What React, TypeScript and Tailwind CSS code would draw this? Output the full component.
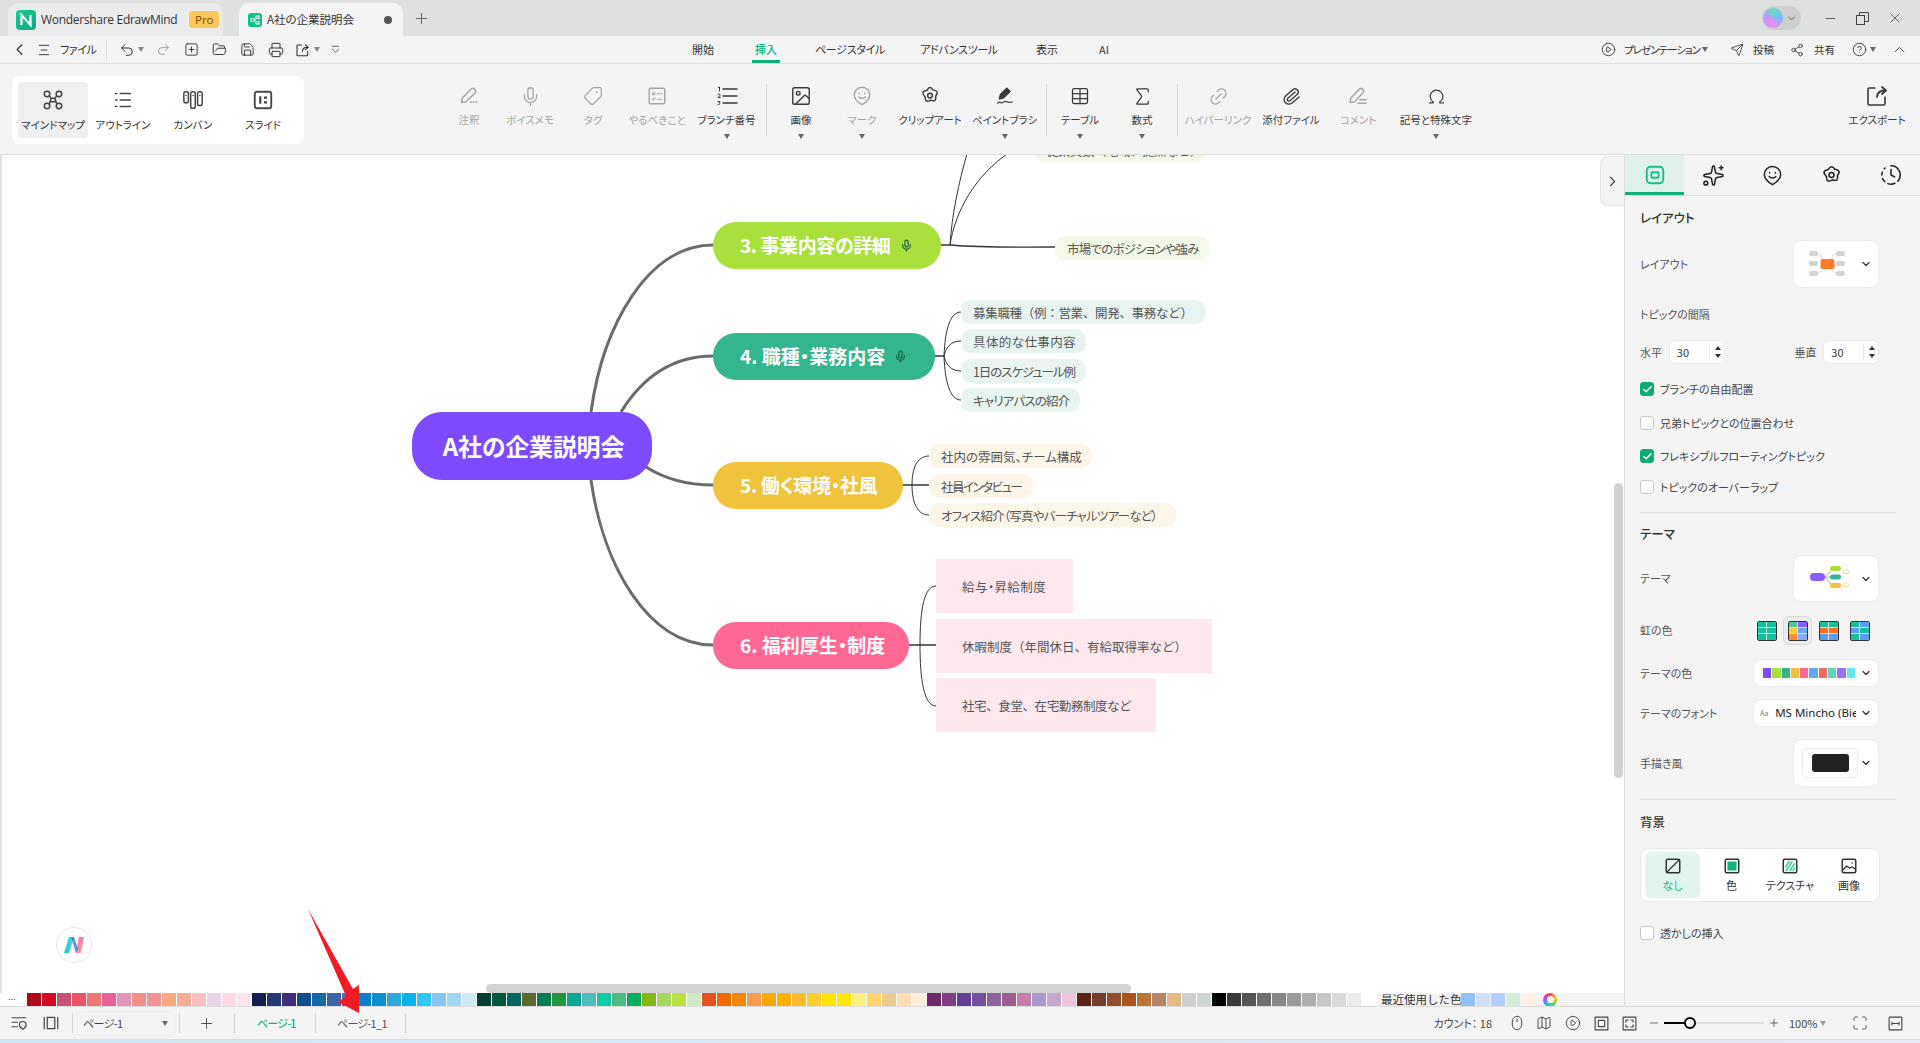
import type { ReactNode } from "react";
import {
  Check,
  ChevronDown,
  ChevronLeft,
  ChevronRight,
  ChevronUp,
  CircleHelp,
  CirclePlay,
  ClockFading,
  FolderOpen,
  Image,
  Link2,
  Map as MapIcon,
  Maximize,
  Mic,
  Minus,
  Mouse,
  Omega,
  Paperclip,
  Plus,
  Printer,
  Redo2,
  Save,
  Send,
  Share2,
  Sigma,
  Sparkles,
  SquarePlus,
  Table,
  Tag,
  Undo2,
  X,
} from "lucide-react";

const palt = "[font-feature-settings:'palt']";

function Svg({ size = 20, children, className = "" }: { size?: number; children: ReactNode; className?: string }) {
  return (
    <svg
      width={size}
      height={size}
      viewBox="0 0 24 24"
      fill="none"
      stroke="currentColor"
      strokeWidth={1.6}
      strokeLinecap="round"
      strokeLinejoin="round"
      className={className}
    >
      {children}
    </svg>
  );
}

function Caret({ className = "" }: { className?: string }) {
  return <span className={`block h-0 w-0 border-x-[3.5px] border-t-[5px] border-x-transparent border-t-[#666] ${className}`} />;
}

/* ---------- drawn icons ---------- */

const MindmapIcon = () => (
  <Svg size={22}>
    <circle cx="5.5" cy="5.5" r="3" />
    <circle cx="18.5" cy="5.5" r="3" />
    <circle cx="5.5" cy="18.5" r="3" />
    <circle cx="18.5" cy="18.5" r="3" />
    <path d="M8 7.5 10 10.5 7.8 16.5M16 7.5 14 10.5 16.2 16.5M10 10h4M10 14h4" />
  </Svg>
);
const OutlineIcon = () => (
  <Svg size={22}>
    <path d="M9 5h11M9 12h11M9 19h11M4 5h1.5M4 12h1.5M4 19h1.5" />
  </Svg>
);
const KanbanIcon = () => (
  <Svg size={22}>
    <rect x="2" y="3" width="5" height="12" rx="2" />
    <rect x="9.5" y="3" width="5" height="18" rx="2" />
    <rect x="17" y="3" width="5" height="15" rx="2" />
    <path d="M4.5 7h0M12 7h0M19.5 7h0" />
  </Svg>
);
const SlideIcon = () => (
  <Svg size={22}>
    <rect x="3" y="3" width="18" height="18" rx="2.5" strokeWidth={2} />
    <path d="M9 8v8" strokeWidth={2.4} strokeLinecap="butt" />
    <path d="M13 9.5h3.5M13 14.5h3.5" strokeWidth={2.4} strokeLinecap="butt" />
  </Svg>
);
const NoteIcon = () => (
  <Svg size={22}>
    <path d="M4 19l.5-4.5L14.5 4.3a2.4 2.4 0 0 1 3.5 0l.7.8a2.4 2.4 0 0 1 0 3.4L8.5 18.6 4 19z" />
    <path d="M14 18.5h.1M17 18.5h.1M20 18.5h.1" strokeWidth={2} />
  </Svg>
);
const TodoIcon = () => (
  <Svg size={22}>
    <rect x="3.5" y="3.5" width="17" height="17" rx="1.5" />
    <path d="M7 8.5h2.5v2H7zM12.5 9.500h5M7 15l1.200 1.200L10 14M12.500 15.500h5" strokeWidth={1.2} />
  </Svg>
);
const BranchNoIcon = () => (
  <Svg size={24}>
    <path d="M8 5h14M8 12h14M8 19h14" strokeWidth={1.4} />
    <path d="M3.500 3.500 4.500 3v4M2.800 10.500c1-1 2.700-.5 2.300.7L3 13.500h2.300M3 17.500h2l-1 1.200c1.200 0 1.400 2.300-1 1.800" strokeWidth={1} />
  </Svg>
);
const MarkIcon = ({ size = 22 }: { size?: number }) => (
  <Svg size={size}>
    <path d="M12 2.500a8.500 8.500 0 0 0-8.500 8.500c0 4.700 4 8 8.500 10.500 4.500-2.500 8.500-5.800 8.500-10.500A8.500 8.500 0 0 0 12 2.500z" />
    <path d="M9 9v.5M15 9v.5M8.500 13c1.800 2 5.200 2 7 0" />
  </Svg>
);
const FlowerIcon = ({ size = 22 }: { size?: number }) => (
  <Svg size={size}>
    <path d="M12 2.800c1.700 0 2.700 1.400 3.500 2.700 1.500.3 3.600.6 4.300 2.100.7 1.700-.6 3.200-1.600 4.300.1 1.500.6 3.600-.7 4.800-1.500 1.100-3.200.4-4.600-.2-1.300.7-3.200 2-4.800 1-1.500-1-1.300-2.900-1.400-4.400C5.500 11.700 3.700 10 4.300 8.100c.6-1.700 2.900-1.900 4.300-2.300C9.400 4.500 10.300 2.800 12 2.800z" />
    <circle cx="12" cy="11.500" r="2.600" />
  </Svg>
);
const BrushIcon = () => (
  <Svg size={22}>
    <path d="M6 15l1-4.500 7-7 3.500 3.500-7 7L6 15z" fill="currentColor" />
    <path d="M4 20c2-3 3-.5 4.500-.5S11 17 13 18s3 1.500 7 .5" strokeWidth={1.3} />
  </Svg>
);
const CommentIcon = () => (
  <Svg size={22}>
    <path d="M3.500 19l.5-4.500L13.500 4.500a2.400 2.400 0 0 1 3.400 0l.6.600a2.400 2.400 0 0 1 0 3.400L8 18.500 3.500 19z" />
    <path d="M14 16h7M12 20h9" />
  </Svg>
);
const ExportIcon = () => (
  <Svg size={24}>
    <path d="M20 13v6.500a1.500 1.500 0 0 1-1.500 1.500h-14A1.500 1.500 0 0 1 3 19.500v-14A1.500 1.500 0 0 1 4.500 4H10" />
    <path d="M12 13c.3-4 3-6.500 8-6.500M17 3l4 3.500-4 3.500" strokeWidth={1.8} />
  </Svg>
);
const ShareBoxIcon = ({ className = "" }: { className?: string }) => (
  <Svg size={16} className={className}>
    <path d="M19 14v5.500a1 1 0 0 1-1 1H4a1 1 0 0 1-1-1v-14a1 1 0 0 1 1-1h6" />
    <path d="M11 14c.3-4 3-6 8-6M15.500 4.500 20 8l-4.500 3.500" />
  </Svg>
);
const ListPinIcon = () => (
  <Svg size={18}>
    <path d="M3 5h18M3 11h7M3 17h7" />
    <path d="M17 10a4.500 4.500 0 0 0-4.500 4.500c0 2.500 2.200 4.300 4.500 6 2.300-1.700 4.500-3.500 4.500-6A4.500 4.500 0 0 0 17 10z" />
  </Svg>
);
const PageViewIcon = () => (
  <Svg size={18}>
    <rect x="7" y="4.500" width="10" height="15" />
    <path d="M3 4.500v15M21 4.500v15" />
  </Svg>
);
const FitIcon = () => (
  <Svg size={17}>
    <rect x="3" y="3" width="18" height="18" />
    <rect x="7.500" y="7.500" width="9" height="9" rx="1" />
  </Svg>
);
const FullIcon = () => (
  <Svg size={17}>
    <rect x="3" y="3" width="18" height="18" />
    <path d="M7 10V7h3M17 10V7h-3M7 14v3h3M17 14v3h-3" />
  </Svg>
);
const FitWidthIcon = () => (
  <Svg size={17}>
    <rect x="3" y="3" width="18" height="18" rx="1" />
    <path d="M7 12h10M7 10v4M17 10v4" />
  </Svg>
);
const LayoutMini = () => (
  <svg width="38" height="26" viewBox="0 0 38 26">
    <g fill="#d2d2d2">
      <rect x="0" y="0" width="9" height="5" rx="2" />
      <rect x="0" y="10" width="9" height="5" rx="2" />
      <rect x="0" y="20" width="9" height="5" rx="2" />
      <rect x="27" y="0" width="9" height="5" rx="2" />
      <rect x="27" y="10" width="9" height="5" rx="2" />
      <rect x="27" y="20" width="9" height="5" rx="2" />
    </g>
    <path d="M9 3c5 0 3 6 6 7M9 22c5 0 3-6 6-7M27 3c-5 0-3 6-6 7M27 22c-5 0-3-6-6-7" stroke="#ddd" fill="none" />
    <rect x="11.500" y="8" width="14" height="10" rx="2" fill="#ff7a2a" />
  </svg>
);
const ThemeMini = () => (
  <svg width="40" height="26" viewBox="0 0 40 26">
    <path d="M14 11c4-1 5-7 11-8M14 11h11M14 11c4 1 5 8 11 9" stroke="#aaa" fill="none" />
    <rect x="0" y="7" width="15" height="8" rx="4" fill="#8a5bff" />
    <rect x="20" y="0" width="11" height="5" rx="2.500" fill="#a9e03c" />
    <rect x="20" y="8.500" width="11" height="5" rx="2.500" fill="#33b58d" />
    <rect x="20" y="17" width="11" height="5" rx="2.500" fill="#f0c33c" />
    <rect x="33" y="4" width="6" height="3.500" rx="1.700" fill="none" stroke="#c5e88c" />
    <rect x="32" y="17" width="7" height="3.500" rx="1.700" fill="none" stroke="#f4dda0" />
  </svg>
);

/* ---------- ribbon ---------- */

function ViewTab({ label, icon, active }: { label: string; icon: ReactNode; active?: boolean }) {
  return (
    <div className={`flex h-[56px] w-[70px] flex-col items-center rounded pt-[6px] text-[#444] ${active ? "bg-[#efefef]" : ""}`}>
      <div className="flex h-[23px] items-center">{icon}</div>
      <span className={`mt-[6px] whitespace-nowrap text-[10.5px] leading-[16px] text-[#333] ${palt}`}>{label}</span>
    </div>
  );
}

function RibbonItem({ label, icon, w, off, caret }: { label: string; icon: ReactNode; w: string; off?: boolean; caret?: boolean }) {
  return (
    <div className={`flex shrink-0 flex-col items-center pt-[20px] ${w} ${off ? "text-[#a6a6a6]" : "text-[#3a3a3a]"}`}>
      <div className="flex h-[24px] items-center">{icon}</div>
      <span className={`mt-[5px] whitespace-nowrap text-[10.5px] leading-[14px] ${palt}`}>{label}</span>
      {caret && <Caret className="mt-[7px]" />}
    </div>
  );
}

const RibbonSep = ({ className }: { className: string }) => <div className={`mt-[20px] h-[52px] w-px shrink-0 bg-[#dcdcdc] ${className}`} />;

/* ---------- mind map ---------- */

function Topic({ className, label, mic, micGap = "ml-[10px]" }: { className: string; label: string; mic?: boolean; micGap?: string }) {
  return (
    <div className={`absolute flex h-[47px] items-center rounded-[23px] pl-[27px] text-[19px] font-bold whitespace-nowrap text-white ${palt} ${className}`}>
      {label}
      {mic && <Mic size={13} strokeWidth={2} className={`text-[#17513c] ${micGap}`} />}
    </div>
  );
}

function Sub({ className, label }: { className: string; label: string }) {
  return <div className={`absolute flex h-[24px] items-center rounded-[10px] pt-[2px] pl-[12px] text-[12.5px] whitespace-nowrap text-[#555] ${className}`}>{label}</div>;
}

function Box({ className, label }: { className: string; label: string }) {
  return <div className={`absolute flex h-[54px] items-center bg-[#fde8ee] pt-[2px] pl-[26px] text-[12.5px] whitespace-nowrap text-[#555] ${className}`}>{label}</div>;
}

/* ---------- colour strip ---------- */

const strip = [
  "#b00a1a", "#d60b20", "#c85078", "#ee5265", "#f27474", "#e9609c", "#e295b8", "#f18e89", "#f19298", "#fda67c", "#f3ae97", "#f9bebe", "#e8d6e8", "#fdd9e6", "#fce4ec",
  "#14214f", "#213a72", "#3f2e7c", "#124a8f", "#1668a9", "#3f63a8", "#4c74b4", "#0a7fd0", "#0a8fd0", "#2fa8e0", "#05b4ee", "#30c8f8", "#8ac4ec", "#a2d6ef", "#cfe9f5",
  "#043f36", "#04583a", "#066562", "#5a6b2c", "#067e54", "#1f963f", "#0aa898", "#50bcc0", "#10c9a6", "#4dbb85", "#07ae5f", "#7fb911", "#a5d95f", "#bce040", "#cfe9c5",
  "#e65120", "#f26a04", "#f58504", "#f89a4f", "#f4a800", "#ffb000", "#ffb92e", "#fccb30", "#ffe300", "#ffe800", "#fdf080", "#ffd469", "#e8cd8e", "#fddcb0", "#fdeed8",
  "#6f2a6b", "#823e85", "#643d95", "#744f9c", "#8e6399", "#9e5b8e", "#c97cad", "#a997cf", "#c5a8cc", "#edc4db",
  "#5c2416", "#763c2e", "#904f28", "#a9561f", "#bd7535", "#b2856d", "#e2bb87", "#cfcfcf", "#ccd6ce",
  "#000000", "#3a3a3a", "#555555", "#707070", "#878787", "#9b9b9b", "#aeaeae", "#c6c6c6", "#d9d9d9", "#ececec", "#ffffff",
];
const recent = ["#93c0fb", "#cfe0fb", "#b3cefb", "#d5ecdd", "#fdf1e3"];
const themeColors = ["#7d4aff", "#a9e03c", "#33b58d", "#f0c33c", "#ff6892", "#62a8f8", "#f26a60", "#5bd6c2", "#9870f8", "#5fe6f2"];
const rainbow = [
  ["#14c09e", "#14c09e", "#14c09e", "#14c09e", "#14c09e", "#14c09e"],
  ["#4fc79a", "#8a5bff", "#f6c93c", "#62a8f8", "#ff8a3c", "#8aa8f8"],
  ["#14c09e", "#14c09e", "#ff6d1f", "#ff6d1f", "#5a9cf8", "#5a9cf8"],
  ["#14c09e", "#5a9cf8", "#5a9cf8", "#14c09e", "#14c09e", "#5a9cf8"],
];

/* ---------- side panel ---------- */

function CheckRow({ label, on, className }: { label: string; on?: boolean; className: string }) {
  return (
    <div className={`flex h-[18px] items-center ${className}`}>
      <span className={`flex size-[14px] items-center justify-center rounded-[3px] border ${on ? "border-[#0eab74] bg-[#0eab74]" : "border-[#c8c8c8] bg-white"}`}>
        {on && <Check size={11} strokeWidth={3} className="text-white" />}
      </span>
      <span className={`ml-[6px] text-[11px] text-[#444] ${palt}`}>{label}</span>
    </div>
  );
}

function Spin({ className = "" }: { className?: string }) {
  return (
    <div className={`flex h-[24px] w-[56px] items-center rounded-md border border-[#ebebeb] bg-white pl-[7px] text-[11px] text-[#333] ${className}`}>
      <span className="w-[32px]">30</span>
      <span className="h-[16px] w-px bg-[#e5e5e5]" />
      <span className="ml-[5px] flex flex-col gap-[4px]">
        <span className="block h-0 w-0 border-x-[3px] border-b-[4px] border-x-transparent border-b-[#333]" />
        <span className="block h-0 w-0 border-x-[3px] border-t-[4px] border-x-transparent border-t-[#333]" />
      </span>
    </div>
  );
}

function PickBox({ w, h, children }: { w: string; h: string; children: ReactNode }) {
  return (
    <div className={`flex items-center justify-between rounded-lg border border-[#ebebeb] bg-white pr-[6px] ${w} ${h}`}>
      {children}
      <ChevronDown size={12} strokeWidth={2.5} className="shrink-0 text-[#333]" />
    </div>
  );
}

const Label = ({ children }: { children: ReactNode }) => <span className={`text-[11px] text-[#555] ${palt}`}>{children}</span>;
const Heading = ({ children, className }: { children: ReactNode; className: string }) => (
  <div className={`flex h-[20px] items-center text-[12.5px] font-medium text-[#333] ${palt} ${className}`}>{children}</div>
);

function SidePanel() {
  return (
    <aside className="w-[296px] shrink-0 border-l border-[#dedede] bg-[#f4f4f4]">
      <div className="flex h-[41px] border-b border-[#dedede]">
        <div className="flex w-[59px] items-center justify-center border-b-[3px] border-[#0fae7b] bg-[#e0f1eb] pt-[2px] text-[#11bf87]">
          <Svg size={22}>
            <rect x="3" y="3" width="18" height="18" rx="4" strokeWidth={2} />
            <rect x="8" y="9" width="8" height="6" rx="1" strokeWidth={2} />
          </Svg>
        </div>
        <div className="flex w-[59px] items-center justify-center text-[#222]"><Sparkles size={23} strokeWidth={1.6} /></div>
        <div className="flex w-[59px] items-center justify-center text-[#222]"><MarkIcon size={23} /></div>
        <div className="flex w-[59px] items-center justify-center text-[#222]"><FlowerIcon size={23} /></div>
        <div className="flex w-[59px] items-center justify-center text-[#222]"><ClockFading size={22} strokeWidth={1.7} /></div>
      </div>

      <div className="pr-[41px] pl-[15px]">
        <Heading className="mt-[12px]">レイアウト</Heading>
        <div className="mt-[12px] flex items-center justify-between">
          <Label>レイアウト</Label>
          <PickBox w="w-[86px]" h="h-[48px]">
            <span className="ml-[15px]"><LayoutMini /></span>
          </PickBox>
        </div>
        <div className="mt-[16px] flex h-[20px] items-center"><Label>トピックの間隔</Label></div>
        <div className="mt-[16px] flex h-[24px] items-center">
          <span className="w-[29px] text-[11px] text-[#555]">水平</span>
          <Spin />
          <span className="ml-[70px] w-[29px] text-[11px] text-[#555]">垂直</span>
          <Spin />
        </div>
        <CheckRow className="mt-[16px]" label="ブランチの自由配置" on />
        <CheckRow className="mt-[16px]" label="兄弟トピックとの位置合わせ" />
        <CheckRow className="mt-[15px]" label="フレキシブルフローティングトピック" on />
        <CheckRow className="mt-[13px]" label="トピックのオーバーラップ" />
        <div className="mt-[16px] -mr-[17px] h-px bg-[#dedede]" />

        <Heading className="mt-[11px]">テーマ</Heading>
        <div className="mt-[11px] flex items-center justify-between">
          <Label>テーマ</Label>
          <PickBox w="w-[86px]" h="h-[47px]">
            <span className="ml-[16px]"><ThemeMini /></span>
          </PickBox>
        </div>
        <div className="mt-[13px] flex h-[31px] items-center">
          <Label>虹の色</Label>
          <div className="ml-auto mr-[5px] flex items-center">
            {rainbow.map((cells, i) => (
              <span key={i} className={`flex size-[29px] items-center justify-center rounded-md ${i === 1 ? "border border-[#d8d8d8] bg-[#ececec]" : ""} ${i === 0 ? "" : "ml-[2px]"}`}>
                <span className="grid size-[20px] grid-cols-2 gap-px rounded-[2px] border border-[#333] bg-[#dedede]">
                  {cells.map((c, j) => (
                    <span key={j} style={{ backgroundColor: c }} />
                  ))}
                </span>
              </span>
            ))}
          </div>
        </div>
        <div className="mt-[13px] flex items-center justify-between">
          <Label>テーマの色</Label>
          <PickBox w="w-[126px]" h="h-[28px]">
            <span className="ml-[9px] flex gap-px">
              {themeColors.map((c) => (
                <span key={c} className="h-[10px] w-[8.300px]" style={{ backgroundColor: c }} />
              ))}
            </span>
          </PickBox>
        </div>
        <div className="mt-[12px] flex items-center justify-between">
          <Label>テーマのフォント</Label>
          <PickBox w="w-[126px]" h="h-[28px]">
            <span className="ml-[6px] text-[7px] text-[#777]">Aa</span>
            <span className="ml-[3px] w-[81px] overflow-hidden text-[11.500px] whitespace-nowrap text-[#222] font-['Noto_Sans',sans-serif]">MS Mincho (Bie</span>
          </PickBox>
        </div>
        <div className="mt-[12px] flex items-center justify-between">
          <Label>手描き風</Label>
          <PickBox w="w-[86px]" h="h-[48px]">
            <span className="ml-[8px] flex h-[30px] w-[56px] items-center justify-center rounded border border-[#ececec]">
              <span className="h-[18px] w-[37px] rounded-[3px] bg-[#222]" />
            </span>
          </PickBox>
        </div>
        <div className="mt-[12px] -mr-[17px] h-px bg-[#dedede]" />

        <Heading className="mt-[12px]">背景</Heading>
        <div className="mt-[16px] flex h-[54px] w-[240px] items-center rounded-lg border border-[#e8e8e8] bg-white pl-[4px] text-[#333]">
          <div className="flex h-[46px] w-[55px] flex-col items-center rounded-md bg-[#e2f4ee] pt-[5px]">
            <Svg size={18}>
              <rect x="3" y="3" width="18" height="18" rx="2" strokeWidth={2} />
              <path d="M4 20 20 4" />
            </Svg>
            <span className={`mt-[2px] text-[11px] leading-[16px] text-[#14b884] ${palt}`}>なし</span>
          </div>
          <div className="ml-[3px] flex h-[46px] w-[57px] flex-col items-center pt-[5px]">
            <Svg size={18}>
              <rect x="3" y="3" width="18" height="18" rx="2" strokeWidth={2} />
              <rect x="6" y="6" width="12" height="12" fill="#0eb27d" stroke="none" />
            </Svg>
            <span className={`mt-[2px] text-[11px] leading-[16px] ${palt}`}>色</span>
          </div>
          <div className="flex h-[46px] w-[60px] flex-col items-center pt-[5px]">
            <Svg size={18}>
              <rect x="3" y="3" width="18" height="18" rx="2" strokeWidth={2} />
              <path d="M6 13l5-7M7 18l8-12M12 18l6-9M16 18l2-3" stroke="#3dcb96" strokeWidth={2} />
            </Svg>
            <span className={`mt-[2px] whitespace-nowrap text-[11px] leading-[16px] ${palt}`}>テクスチャ</span>
          </div>
          <div className="flex h-[46px] w-[58px] flex-col items-center pt-[5px]">
            <Svg size={18}>
              <rect x="3" y="3" width="18" height="18" rx="2" strokeWidth={2} />
              <path d="M4 17l5-5 4 3 3-2 4 3" strokeWidth={1.600} />
              <path d="M16 8h.1" strokeWidth={2} />
            </Svg>
            <span className={`mt-[2px] text-[11px] leading-[16px] ${palt}`}>画像</span>
          </div>
        </div>
        <CheckRow className="mt-[22px]" label="透かしの挿入" />
      </div>
    </aside>
  );
}

const StatusSep = () => <div className="h-[20px] w-px shrink-0 bg-[#d4d4d4]" />;

export default function App() {
  return (
    <div className={`relative flex h-[1043px] w-[1920px] flex-col overflow-hidden bg-[#f4f4f4] font-['Noto_Sans_CJK_JP','Noto_Sans',sans-serif] text-[#333]`}>
      {/* Title bar */}
      <div className="flex h-[36px] shrink-0 items-end bg-[#dfe1e0]">
        <div className="ml-[8px] flex h-[33px] w-[215px] items-center rounded-t-[10px] bg-[#ebebeb] pl-[8px]">
          <svg width="20" height="20" viewBox="0 0 20 20">
            <defs>
              <linearGradient id="appLogo" x1="0" y1="0" x2="1" y2="1">
                <stop offset="0" stopColor="#1ec98f" />
                <stop offset="1" stopColor="#0ea888" />
              </linearGradient>
            </defs>
            <rect width="20" height="20" rx="4" fill="url(#appLogo)" />
            <path d="M5.500 15V5l9 10V5" fill="none" stroke="#fff" strokeWidth="2.200" />
          </svg>
          <span className="ml-[5px] font-['Open_Sans',sans-serif] text-[12px] tracking-[-0.3px] whitespace-nowrap text-[#333]">Wondershare EdrawMind</span>
          <span className="ml-[12px] flex h-[17px] w-[30px] items-center justify-center rounded bg-[#fcc75a] font-['Open_Sans',sans-serif] text-[11.500px] text-[#7a4a00]">Pro</span>
        </div>
        <div className="ml-[16px] flex h-[33px] w-[164px] items-center rounded-t-[10px] bg-[#f4f4f4] pl-[9px]">
          <span className="flex size-[14px] items-center justify-center rounded-[3px] bg-[#12c08a]">
            <svg width="10" height="10" viewBox="0 0 10 10" fill="none" stroke="#fff" strokeWidth="1">
              <rect x="1" y="3.500" width="3" height="3" />
              <rect x="6" y="1" width="3" height="2.500" />
              <rect x="6" y="6.500" width="3" height="2.500" />
              <path d="M4 5h2" />
            </svg>
          </span>
          <span className={`ml-[5px] text-[11.500px] whitespace-nowrap ${palt}`}>A社の企業説明会</span>
          <span className="ml-auto mr-[11px] size-[8px] rounded-full bg-[#555]" />
        </div>
        <Plus size={17} strokeWidth={1.5} className="mb-[9px] ml-[10px] text-[#666]" />
        <div className="mb-[6px] ml-auto flex h-[24px] w-[39px] items-center rounded-full bg-[#cfcfcf] pl-[1px]">
          <span className="size-[20px] rounded-full bg-[conic-gradient(#5fe0c0,#7db8ff,#f08cf0,#c890ff,#5fe0c0)]" />
          <ChevronDown size={11} strokeWidth={2} className="ml-[3px] text-[#555]" />
        </div>
        <Minus size={15} strokeWidth={1.3} className="mb-[10px] ml-[22px] text-[#444]" />
        <svg width="13" height="13" viewBox="0 0 13 13" fill="none" stroke="#444" className="mb-[11px] ml-[18px]">
          <rect x="0.500" y="3.500" width="8" height="9" />
          <path d="M3.500 3.500v-3h9v9h-4" />
        </svg>
        <X size={16} strokeWidth={1.2} className="mb-[10px] ml-[18px] mr-[17px] text-[#444]" />
      </div>

      {/* Menu bar */}
      <div className="flex h-[28px] shrink-0 items-center border-b border-[#dedede] text-[#333]">
        <div className="flex h-full w-[672px] shrink-0 items-center">
          <ChevronLeft size={19} strokeWidth={1.5} className="ml-[10px]" />
          <Svg size={14} className="ml-[8px]">
            <path d="M4 4h16M7 12h10M4 20h16" />
          </Svg>
          <span className={`ml-[9px] w-[36px] text-[11px] tracking-[-0.4px] whitespace-nowrap ${palt}`}>ファイル</span>
          <span className="ml-[10px] h-[20px] w-px bg-[#dcdcdc]" />
          <Undo2 size={16} strokeWidth={1.5} className="ml-[12px]" />
          <Caret className="ml-[3px] !border-t-[#888]" />
          <Redo2 size={15} strokeWidth={1.5} className="ml-[12px] text-[#999]" />
          <SquarePlus size={15} strokeWidth={1.5} className="ml-[13px]" />
          <FolderOpen size={15} strokeWidth={1.5} className="ml-[13px]" />
          <Save size={15} strokeWidth={1.5} className="ml-[13px]" />
          <Printer size={16} strokeWidth={1.5} className="ml-[13px]" />
          <ShareBoxIcon className="ml-[11px]" />
          <Caret className="ml-[3px] !border-t-[#888]" />
          <Svg size={11} className="ml-[10px]">
            <path d="M5 5h14M5 11l7 7 7-7" />
          </Svg>
        </div>
        <div className={`flex h-full items-center text-[11px] ${palt}`}>
          <span className="w-[62px] text-center">開始</span>
          <span className="flex h-full w-[64px] justify-center">
            <span className="flex h-full w-[28px] items-center justify-center border-y-[3px] border-t-transparent border-b-[#0fae7b] font-medium whitespace-nowrap text-[#10b07d]">挿入</span>
          </span>
          <span className="w-[104px] text-center tracking-[-0.3px]">ページスタイル</span>
          <span className="w-[114px] text-center tracking-[-0.4px]">アドバンスツール</span>
          <span className="w-[62px] text-center">表示</span>
          <span className="w-[52px] text-center">AI</span>
        </div>
        <div className={`ml-auto flex items-center text-[10.500px] ${palt}`}>
          <CirclePlay size={15} strokeWidth={1.4} />
          <span className="ml-[8px] whitespace-nowrap tracking-[-1px]">プレゼンテーション</span>
          <Caret className="ml-[2px]" />
          <Send size={14} strokeWidth={1.4} className="ml-[22px]" />
          <span className="ml-[9px] whitespace-nowrap">投稿</span>
          <Share2 size={14} strokeWidth={1.4} className="ml-[16px]" />
          <span className="ml-[10px] whitespace-nowrap">共有</span>
          <CircleHelp size={15} strokeWidth={1.4} className="ml-[17px]" />
          <Caret className="ml-[3px]" />
          <ChevronUp size={17} strokeWidth={1.3} className="ml-[15px] mr-[12px]" />
        </div>
      </div>

      {/* Ribbon */}
      <div className="flex h-[91px] shrink-0 border-b border-[#dedede]">
        <div className="mt-[12px] ml-[12px] flex h-[68px] w-[292px] shrink-0 items-center rounded-lg bg-white pl-[6px]">
          <ViewTab label="マインドマップ" icon={<MindmapIcon />} active />
          <ViewTab label="アウトライン" icon={<OutlineIcon />} />
          <ViewTab label="カンバン" icon={<KanbanIcon />} />
          <ViewTab label="スライド" icon={<SlideIcon />} />
        </div>
        <div className="ml-[140px] flex">
          <RibbonItem w="w-[50px]" label="注釈" off icon={<NoteIcon />} />
          <RibbonItem w="w-[72px]" label="ボイスメモ" off icon={<Mic size={21} strokeWidth={1.5} />} />
          <RibbonItem w="w-[54px]" label="タグ" off icon={<Tag size={20} strokeWidth={1.5} className="rotate-90" />} />
          <RibbonItem w="w-[74px]" label="やるべきこと" off icon={<TodoIcon />} />
          <RibbonItem w="w-[65px]" label="ブランチ番号" caret icon={<BranchNoIcon />} />
          <RibbonSep className="ml-[7px] mr-[4px]" />
          <RibbonItem w="w-[60px]" label="画像" caret icon={<Image size={22} strokeWidth={1.5} />} />
          <RibbonItem w="w-[62px]" label="マーク" off caret icon={<MarkIcon />} />
          <RibbonItem w="w-[74px]" label="クリップアート" icon={<FlowerIcon />} />
          <RibbonItem w="w-[75px]" label="ペイントブラシ" caret icon={<BrushIcon />} />
          <RibbonSep className="ml-[4px] mr-[3px]" />
          <RibbonItem w="w-[60px]" label="テーブル" caret icon={<Table size={20} strokeWidth={1.5} />} />
          <RibbonItem w="w-[64px]" label="数式" caret icon={<Sigma size={23} strokeWidth={1.3} />} />
          <RibbonSep className="ml-[3px] mr-[2px]" />
          <RibbonItem w="w-[76px]" label="ハイパーリンク" off icon={<Link2 size={21} strokeWidth={1.6} className="-rotate-45" />} />
          <RibbonItem w="w-[70px]" label="添付ファイル" icon={<Paperclip size={19} strokeWidth={1.7} className="rotate-[5deg]" />} />
          <RibbonItem w="w-[64px]" label="コメント" off icon={<CommentIcon />} />
          <RibbonItem w="w-[92px]" label="記号と特殊文字" caret icon={<Omega size={19} strokeWidth={1.5} />} />
        </div>
        <div className="mr-[8px] ml-auto">
          <RibbonItem w="w-[70px]" label="エクスポート" icon={<ExportIcon />} />
        </div>
      </div>

      {/* Main */}
      <div className="flex h-[851px] shrink-0">
        <div className="flex w-[1624px] shrink-0 flex-col">
          <div className="relative h-[838px] shrink-0 overflow-hidden bg-white shadow-[inset_2px_0_0_#e0e0e0]">
            <svg className="absolute inset-0 h-full w-full" viewBox="0 155 1624 838" fill="none">
              <g stroke="#6b6b6b" strokeWidth="3">
                <path d="M591 412C603 325 648 245 713 245" />
                <path d="M621 412C642 378 672 356 713 356" />
                <path d="M646 467C665 479 685 485 713 485" />
                <path d="M591 480C603 565 648 645 713 645" />
              </g>
              <g stroke="#333" strokeWidth="1">
                <path d="M941 245H950" strokeWidth="1.500" />
                <path d="M950 245C952 215 958 185 968 150" />
                <path d="M950 245C955 212 975 175 1010 152" />
                <path d="M950 245C985 248 1010 247 1055 247" strokeWidth="1.300" />
                <path d="M935 356H944" strokeWidth="1.500" />
                <path d="M944 356C945 330 950 312 961 312" />
                <path d="M944 356C946 348 950 341 961 341" />
                <path d="M944 356C946 364 950 371 961 371" />
                <path d="M944 356C945 382 950 400 961 400" />
                <path d="M903 485H929" strokeWidth="1.500" />
                <path d="M912 485C912 470 916 456 929 456" />
                <path d="M912 485C912 500 916 515 929 515" />
                <path d="M909 645H936" strokeWidth="1.500" />
                <path d="M920 645C920 610 924 586 936 586" />
                <path d="M920 645C920 680 924 706 936 706" />
              </g>
            </svg>

            <div className={`absolute top-[257px] left-[412px] flex h-[68px] w-[240px] items-center justify-center rounded-[30px] pl-[3px] bg-[#7d4aff] text-[24px] font-bold tracking-[-0.2px] whitespace-nowrap text-white ${palt}`}>A社の企業説明会</div>
            <Topic className="top-[67px] left-[713px] w-[228px] bg-[#a9e03c] tracking-[-0.4px]" label="3. 事業内容の詳細" mic micGap="ml-[10px]" />
            <Topic className="top-[178px] left-[713px] w-[222px] bg-[#33b58d]" label="4. 職種・業務内容" mic micGap="ml-[9px]" />
            <Topic className="top-[307px] left-[713px] w-[190px] bg-[#f0c33c] tracking-[-0.3px]" label="5. 働く環境・社風" />
            <Topic className="top-[467px] left-[713px] w-[196px] bg-[#ff6892]" label="6. 福利厚生・制度" />

            <Sub className="top-[-17px] left-[1034px] w-[172px] bg-[#f3f9e8] tracking-[-0.5px]" label="従業員数（地域、拠点など）" />
            <Sub className={`top-[81px] left-[1055px] w-[154px] bg-[#f3f9e8] tracking-[-0.8px] ${palt}`} label="市場でのポジションや強み" />
            <Sub className="top-[145px] left-[961px] w-[244px] bg-[#e8f4f0] tracking-[-0.3px]" label="募集職種（例：営業、開発、事務など）" />
            <Sub className={`top-[174px] left-[961px] w-[125px] bg-[#e8f4f0] tracking-[0.4px] ${palt}`} label="具体的な仕事内容" />
            <Sub className={`top-[204px] left-[961px] w-[125px] bg-[#e8f4f0] tracking-[-1.1px] ${palt}`} label="1日のスケジュール例" />
            <Sub className={`top-[233px] left-[961px] w-[119px] bg-[#e8f4f0] tracking-[-0.8px] ${palt}`} label="キャリアパスの紹介" />
            <Sub className={`top-[289px] left-[929px] w-[163px] bg-[#fdf5e8] ${palt}`} label="社内の雰囲気、チーム構成" />
            <Sub className={`top-[319px] left-[929px] w-[104px] bg-[#fdf5e8] tracking-[-1.5px] ${palt}`} label="社員インタビュー" />
            <Sub className={`top-[348px] left-[929px] w-[247px] bg-[#fdf5e8] tracking-[-0.8px] ${palt}`} label="オフィス紹介（写真やバーチャルツアーなど）" />
            <Box className={`top-[404px] left-[936px] w-[137px] tracking-[0.4px] ${palt}`} label="給与・昇給制度" />
            <Box className="top-[464px] left-[936px] w-[276px]" label="休暇制度（年間休日、有給取得率など）" />
            <Box className="top-[523px] left-[936px] w-[220px] tracking-[-0.4px]" label="社宅、食堂、在宅勤務制度など" />

            <div className="absolute top-[772px] left-[56px] flex size-[36px] items-center justify-center rounded-full border border-[#e6e6e6] bg-white">
              <svg width="20" height="18" viewBox="0 0 20 18">
                <defs>
                  <linearGradient id="aiLeft" x1="0" y1="1" x2="1" y2="0">
                    <stop offset="0" stopColor="#1ccfb0" />
                    <stop offset="1" stopColor="#3fd8f0" />
                  </linearGradient>
                  <linearGradient id="aiRight" x1="0" y1="0" x2="1" y2="1">
                    <stop offset="0" stopColor="#f45cc0" />
                    <stop offset="1" stopColor="#f7b78a" />
                  </linearGradient>
                </defs>
                <path d="M5 1h5L5 17H0z" fill="url(#aiLeft)" />
                <path d="M15 1h5l-3 16h-5z" fill="url(#aiRight)" />
                <path d="M7 1h3l4 12-2 4z" fill="#2b6fd8" opacity="0.75" />
              </svg>
            </div>

            <div className="absolute top-[328px] right-[1px] h-[295px] w-[9px] rounded-full bg-[#d2d2d2]" />
            <div className="absolute bottom-0 left-[486px] h-[9px] w-[645px] rounded-full bg-[#d2d2d2]" />
            <div className="absolute top-[1px] left-[1600px] flex h-[50px] w-[24px] items-center justify-center rounded-l-lg border border-r-0 border-[#e6e6e6] bg-[#f4f4f4]">
              <ChevronRight size={17} strokeWidth={1.5} className="text-[#444]" />
            </div>
          </div>

          <div className="flex h-[13px] shrink-0 bg-white">
            <span className="w-[27px] pl-[8px] text-[9px] leading-[8px] text-[#555]">...</span>
            {strip.map((c, i) => (
              <span key={i} className="mr-px w-[14px] shrink-0" style={{ backgroundColor: c }} />
            ))}
            <div className="flex flex-1 items-center overflow-hidden bg-[#f4f4f4]">
              <span className="ml-[4px] w-[80px] shrink-0 overflow-hidden text-[11.500px] leading-[13px] whitespace-nowrap">最近使用した色</span>
              {recent.map((c) => (
                <span key={c} className="mr-px h-full w-[14px] shrink-0" style={{ backgroundColor: c }} />
              ))}
              <span className="ml-[7px] size-[14px] shrink-0 rounded-full bg-[conic-gradient(#ff3b3b,#ffc400,#4cd964,#29b6f6,#b04cf0,#ff3b3b)] p-[3.500px]">
                <span className="block size-full rounded-full bg-white" />
              </span>
            </div>
          </div>
        </div>
        <SidePanel />
      </div>

      {/* Status bar */}
      <div className="flex h-[34px] shrink-0 items-center border-y border-[#dcdcdc] bg-[#f4f4f4] text-[#444]">
        <span className="ml-[10px]"><ListPinIcon /></span>
        <span className="ml-[14px]"><PageViewIcon /></span>
        <span className="ml-[12px]"><StatusSep /></span>
        <div className="ml-[4px] flex h-[25px] w-[98px] items-center rounded-md border border-[#efefef] pl-[5px]">
          <span className={`text-[11px] tracking-[-0.6px] whitespace-nowrap ${palt}`}>ページ-1</span>
          <Caret className="ml-auto mr-[6px]" />
        </div>
        <span className="ml-[4px]"><StatusSep /></span>
        <Plus size={17} strokeWidth={1.3} className="ml-[18px]" />
        <span className="ml-[19px]"><StatusSep /></span>
        <span className={`ml-[22px] w-[39px] text-[11px] font-medium tracking-[-0.8px] whitespace-nowrap text-[#14b884] ${palt}`}>ページ-1</span>
        <span className="ml-[19px]"><StatusSep /></span>
        <span className={`ml-[21px] w-[49px] text-[11px] tracking-[-0.7px] whitespace-nowrap text-[#555] ${palt}`}>ページ-1_1</span>
        <span className="ml-[19px]"><StatusSep /></span>
        <div className={`ml-auto flex items-center pr-[16px] text-[11px] ${palt}`}>
          <span className="whitespace-nowrap">カウント： 18</span>
          <Mouse size={16} strokeWidth={1.4} className="ml-[17px]" />
          <MapIcon size={16} strokeWidth={1.4} className="ml-[11px]" />
          <CirclePlay size={16} strokeWidth={1.4} className="ml-[13px]" />
          <span className="ml-[12px]"><FitIcon /></span>
          <span className="ml-[11px]"><FullIcon /></span>
          <Minus size={12} strokeWidth={1.5} className="ml-[10px]" />
          <div className="relative ml-[4px] h-[2px] w-[100px] bg-[#e0e0e0]">
            <div className="h-[2px] w-[26px] bg-black" />
            <span className="absolute top-[-5px] left-[20px] size-[12px] rounded-full border-2 border-black bg-white" />
          </div>
          <Plus size={12} strokeWidth={1.5} className="ml-[4px]" />
          <span className="ml-[9px] w-[30px] whitespace-nowrap">100%</span>
          <Caret className="ml-[1px] !border-t-[#999]" />
          <Maximize size={16} strokeWidth={1.4} className="ml-[26px]" />
          <span className="ml-[19px]"><FitWidthIcon /></span>
        </div>
      </div>
      <div className="h-[3px] shrink-0 bg-gradient-to-r from-[#cfe8ef] to-[#e4e9f5]" />

      {/* Annotation arrow over the page tabs */}
      <svg className="pointer-events-none absolute top-0 left-0 h-full w-full" viewBox="0 0 1920 1043">
        <path d="M308 909 353 989 359 985 359 1013 338 1002 346 996Z" fill="#ee1c25" />
      </svg>
    </div>
  );
}
